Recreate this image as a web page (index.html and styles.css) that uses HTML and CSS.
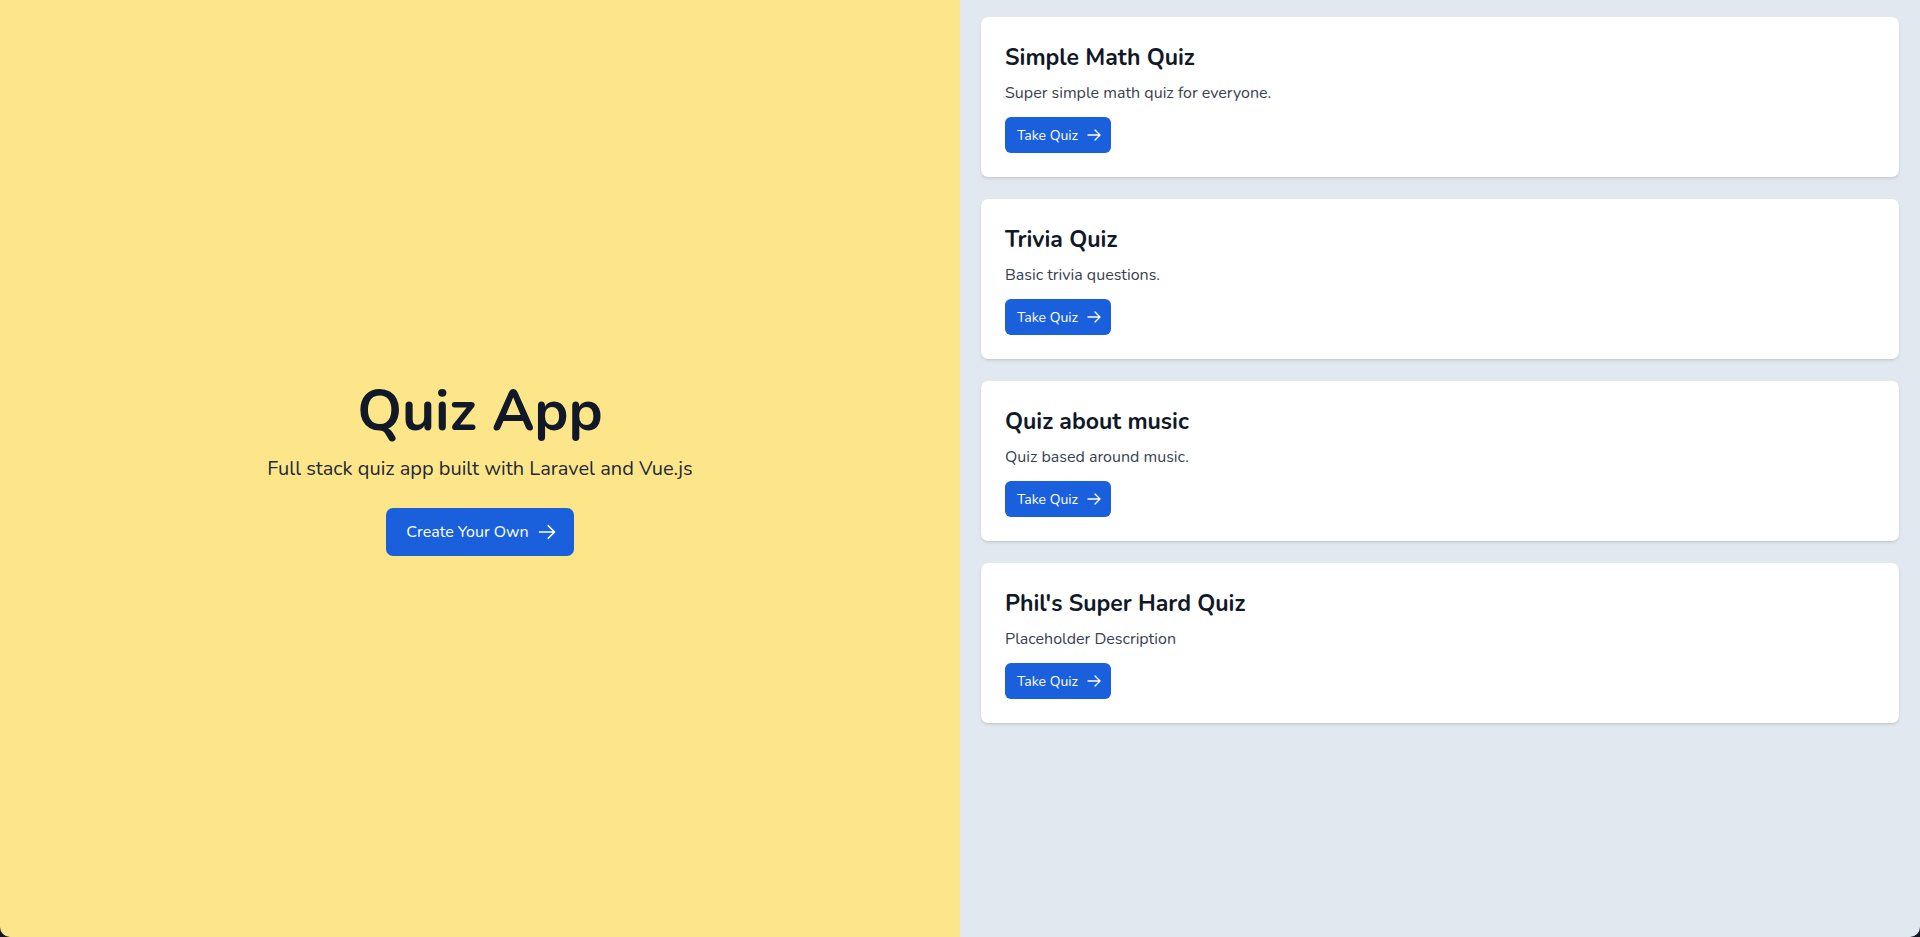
FILE: index.html
```html
<!DOCTYPE html>
<html lang="en">
<head>
<meta charset="utf-8">
<title>Quiz App</title>
<link rel="stylesheet" href="styles.css">
</head>
<body>
<div class="app">
  <section class="hero">
    <div class="hero-inner">
      <h1 class="hero-title">Quiz App</h1>
      <p class="hero-sub">Full stack quiz app built with Laravel and Vue.js</p>
      <a class="btn btn-lg" href="#">Create Your Own
        <svg class="icon-lg" viewBox="0 0 24 24" fill="none" stroke="currentColor" stroke-width="2" stroke-linecap="round" stroke-linejoin="round"><path d="M13.5 4.5 21 12m0 0-7.5 7.5M21 12H3"/></svg>
      </a>
    </div>
  </section>
  <section class="list">
    <article class="card">
      <h2 class="card-title">Simple Math Quiz</h2>
      <p class="card-desc">Super simple math quiz for everyone.</p>
      <a class="btn btn-sm" href="#">Take Quiz
        <svg class="icon-sm" viewBox="0 0 24 24" fill="none" stroke="currentColor" stroke-width="2" stroke-linecap="round" stroke-linejoin="round"><path d="M13.5 4.5 21 12m0 0-7.5 7.5M21 12H3"/></svg>
      </a>
    </article>
    <article class="card">
      <h2 class="card-title">Trivia Quiz</h2>
      <p class="card-desc">Basic trivia questions.</p>
      <a class="btn btn-sm" href="#">Take Quiz
        <svg class="icon-sm" viewBox="0 0 24 24" fill="none" stroke="currentColor" stroke-width="2" stroke-linecap="round" stroke-linejoin="round"><path d="M13.5 4.5 21 12m0 0-7.5 7.5M21 12H3"/></svg>
      </a>
    </article>
    <article class="card">
      <h2 class="card-title">Quiz about music</h2>
      <p class="card-desc">Quiz based around music.</p>
      <a class="btn btn-sm" href="#">Take Quiz
        <svg class="icon-sm" viewBox="0 0 24 24" fill="none" stroke="currentColor" stroke-width="2" stroke-linecap="round" stroke-linejoin="round"><path d="M13.5 4.5 21 12m0 0-7.5 7.5M21 12H3"/></svg>
      </a>
    </article>
    <article class="card">
      <h2 class="card-title">Phil's Super Hard Quiz</h2>
      <p class="card-desc">Placeholder Description</p>
      <a class="btn btn-sm" href="#">Take Quiz
        <svg class="icon-sm" viewBox="0 0 24 24" fill="none" stroke="currentColor" stroke-width="2" stroke-linecap="round" stroke-linejoin="round"><path d="M13.5 4.5 21 12m0 0-7.5 7.5M21 12H3"/></svg>
      </a>
    </article>
  </section>
</div>
</body>
</html>
```
FILE: styles.css
```css
* { box-sizing: border-box; }
html, body { margin: 0; padding: 0; height: 100%; }
body {
  background: #14142a;
  font-family: "Nunito", "Lato", "Noto Sans", sans-serif;
  color: #111827;
}
.app {
  display: grid;
  grid-template-columns: 960px 960px;
  height: 937px;
  border-radius: 0 0 10px 10px;
  overflow: hidden;
}
.hero {
  background: #fde68a;
  display: flex;
  align-items: center;
  justify-content: center;
}
.hero-inner {
  display: flex;
  flex-direction: column;
  align-items: center;
  text-align: center;
}
.hero-title {
  margin: 0;
  font-size: 57px;
  line-height: 60px;
  font-weight: 700;
  color: #111827;
}
.hero-sub {
  margin: 14px 0 0;
  font-size: 20px;
  line-height: 28px;
  color: #1f2937;
}
.btn {
  display: inline-flex;
  align-items: center;
  background: #1a5fdb;
  color: #fff;
  text-decoration: none;
}
.btn-lg {
  margin-top: 25px;
  height: 48px;
  padding: 0 17px 0 20px;
  border-radius: 7px;
  font-size: 16px;
}
.icon-lg { width: 20px; height: 20px; margin-left: 8px; }
.list {
  background: #e2e8f0;
  padding: 17px 21px 0 21px;
  display: flex;
  flex-direction: column;
  gap: 22px;
}
.card {
  background: #fff;
  border-radius: 7px;
  padding: 25px 24px 24px 24px;
  box-shadow: 0 2px 4px -1px rgba(0,0,0,0.12), 0 1px 2px rgba(0,0,0,0.06);
  display: flex;
  flex-direction: column;
  align-items: flex-start;
}
.card-title {
  margin: 0;
  font-size: 23px;
  line-height: 32px;
  font-weight: 700;
  color: #111827;
}
.card-desc {
  margin: 7px 0 0;
  font-size: 16px;
  line-height: 24px;
  color: #374151;
}
.btn-sm {
  margin-top: 12px;
  height: 36px;
  padding: 0 9px 0 12px;
  border-radius: 6px;
  font-size: 14px;
}
.icon-sm { width: 16px; height: 16px; margin-left: 8px; }
```
